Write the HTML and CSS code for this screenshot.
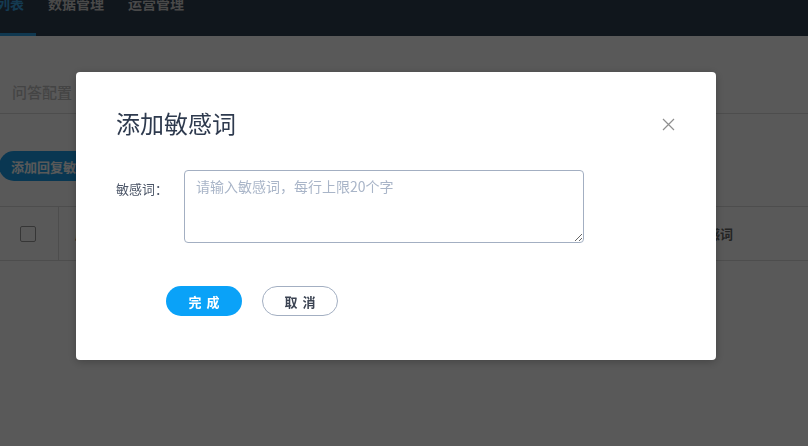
FILE: index.html
```html
<!DOCTYPE html>
<html lang="zh-CN">
<head>
<meta charset="utf-8">
<title>添加敏感词</title>
<link rel="stylesheet" href="styles.css">
</head>
<body>
<div class="page">
  <header class="topnav">
    <nav class="tabs">
      <a class="tab active">列表</a>
      <a class="tab">数据管理</a>
      <a class="tab">运营管理</a>
    </nav>
  </header>
  <section class="section-head">
    <h2 class="section-title">问答配置</h2>
  </section>
  <div class="toolbar">
    <button class="btn-add">添加回复敏感词</button>
  </div>
  <div class="table">
    <div class="th th-check"><span class="checkbox"></span></div>
    <div class="th">序号</div>
    <div class="th th-word">敏感词</div>
  </div>
</div>

<div class="mask">
  <div class="modal">
    <h3 class="modal-title">添加敏感词</h3>
    <button class="modal-close" aria-label="关闭">
      <svg width="13" height="13" viewBox="0 0 13 13"><path d="M1 1L12 12M12 1L1 12" stroke="#8f8f8f" stroke-width="1.2" fill="none"/></svg>
    </button>
    <div class="form-row">
      <label class="form-label">敏感词：</label>
      <textarea class="form-input" placeholder="请输入敏感词，每行上限20个字"></textarea>
    </div>
    <div class="form-actions">
      <button class="btn btn-primary">完成</button>
      <button class="btn btn-default">取消</button>
    </div>
  </div>
</div>
</body>
</html>
```

FILE: styles.css
```css
* { box-sizing: border-box; }
html, body { margin: 0; padding: 0; }
body {
  width: 808px;
  height: 446px;
  overflow: hidden;
  background: #fff;
  font-family: "Noto Sans CJK SC", "Noto Sans", sans-serif;
}
.page { width: 808px; }

.topnav {
  height: 36px;
  background: #303f50;
}
.tabs {
  display: flex;
  margin-left: -16px;
  height: 36px;
}
.tab {
  display: block;
  padding: 0 12px;
  height: 36px;
  color: #d0d0d0;
  font-size: 14px;
  font-weight: 700;
  line-height: 14px;
  border-bottom: 3px solid transparent;
}
.tab::before { content: ""; display: block; margin-top: -4px; }
.tab.active {
  color: #3aa6e8;
  border-bottom-color: #2ea0e6;
}

.section-head {
  height: 78px;
  border-bottom: 1px solid #dcdcdc;
  padding: 0 12px;
  display: flex;
  align-items: center;
}
.section-title {
  margin: 34px 0 0;
  font-size: 15px;
  font-weight: 500;
  color: #c4c4c4;
}

.toolbar {
  padding: 37px 0 25px;
}
.btn-add {
  height: 30px;
  padding: 0 12px;
  margin-left: -1px;
  border: none;
  border-radius: 15px;
  background: #1a9fea;
  color: #fff;
  font-family: inherit;
  font-size: 13px;
  font-weight: 700;
}

.table {
  display: grid;
  grid-template-columns: 59px 621px 1fr;
  height: 55px;
  border-top: 1px solid #dcdcdc;
  border-bottom: 1px solid #dcdcdc;
}
.th {
  display: flex;
  align-items: center;
  padding-left: 16px;
  font-size: 13px;
  font-weight: 700;
  color: #666;
}
.th-check {
  padding-left: 20px;
  border-right: 1px solid #dcdcdc;
}
.th-word { padding-left: 14px; }
.checkbox {
  width: 16px;
  height: 16px;
  border: 1px solid #9c9c9c;
  border-radius: 2px;
  background: #fff;
}

.mask {
  position: fixed;
  inset: 0;
  background: rgba(0, 0, 0, 0.65);
  display: flex;
  align-items: flex-start;
}
.modal {
  position: relative;
  margin: 72px 0 0 76px;
  width: 640px;
  height: 288px;
  background: #fff;
  border-radius: 4px;
  box-shadow: 0 2px 10px rgba(0,0,0,0.25);
  padding: 35px 40px 0;
}
.modal-title {
  margin: 0;
  font-size: 24px;
  line-height: 32px;
  font-weight: 400;
  color: #2e3a4e;
}
.modal-close {
  position: absolute;
  top: 46px;
  right: 41px;
  width: 13px;
  height: 13px;
  padding: 0;
  border: none;
  background: none;
  display: block;
}
.modal-close svg { display: block; }

.form-row {
  display: flex;
  margin-top: 31px;
}
.form-label {
  width: 68px;
  flex: none;
  line-height: 38px;
  font-size: 13px;
  color: #4a5466;
}
.form-input {
  width: 400px;
  height: 73px;
  border: 1px solid #a3afc2;
  border-radius: 4px;
  padding: 5px 11px;
  font-family: inherit;
  font-size: 14px;
  line-height: 20px;
  color: #333;
  outline: none;
}
.form-input::placeholder { color: #a9b5c8; }

.form-actions {
  display: flex;
  gap: 20px;
  margin-top: 43px;
  padding-left: 50px;
}
.btn {
  width: 76px;
  height: 30px;
  border-radius: 15px;
  font-family: inherit;
  font-size: 13px;
  font-weight: 700;
  letter-spacing: 5px;
  text-indent: 5px;
  padding: 0;
}
.btn-primary {
  background: #0aa2f8;
  border: none;
  color: #fff;
}
.btn-default {
  background: #fff;
  border: 1px solid #a3afc2;
  color: #3b4352;
}
```
